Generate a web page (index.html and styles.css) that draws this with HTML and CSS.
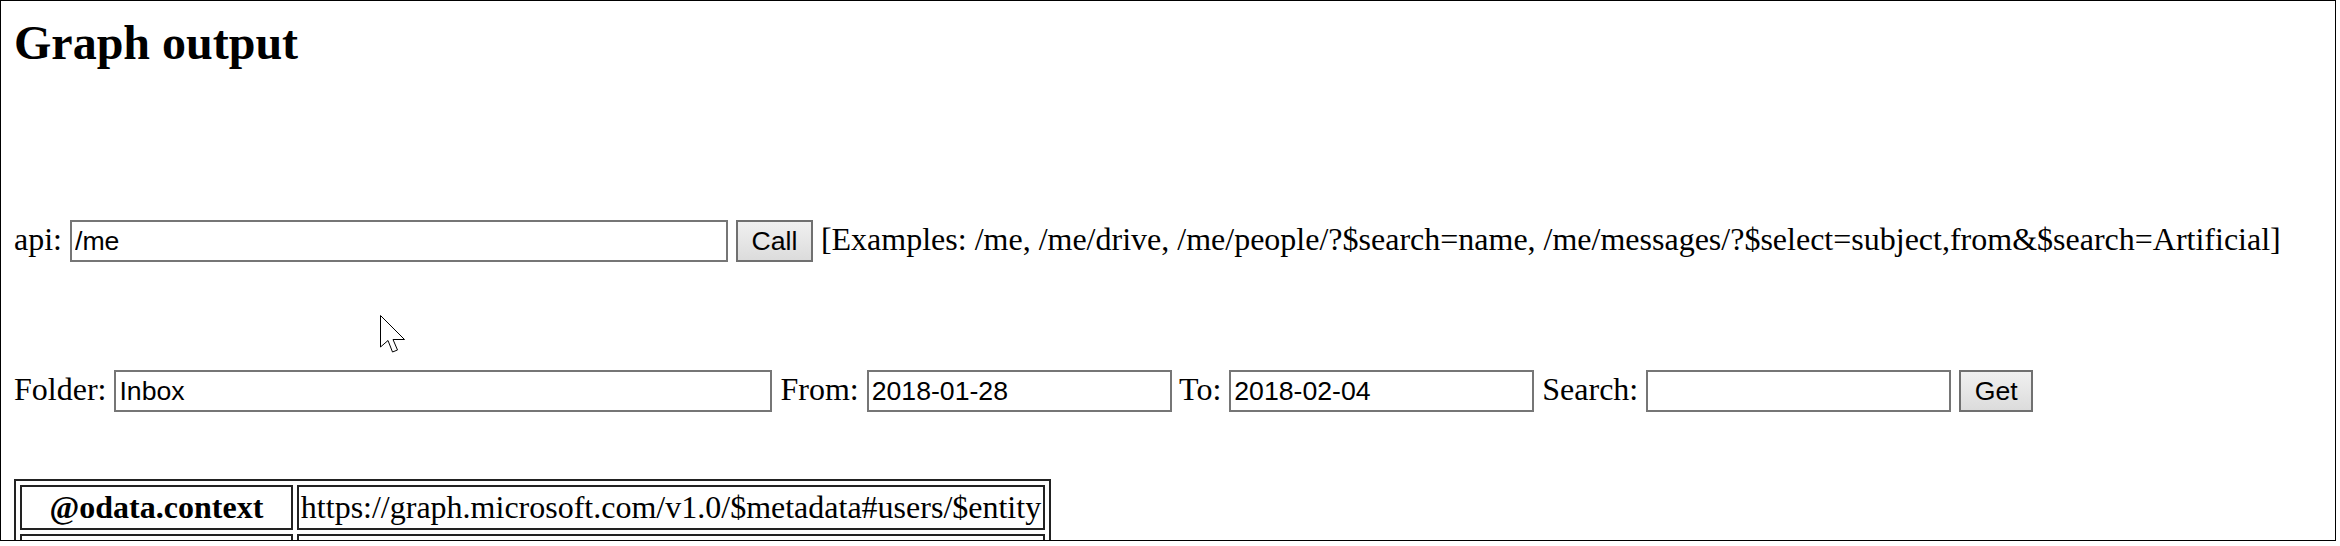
FILE: index.html
```html
<!DOCTYPE html>
<html>
<head>
<meta charset="utf-8">
<title>Graph output</title>
<link rel="stylesheet" href="styles.css">
</head>
<body>
<div class="frame">
  <h2 class="title">Graph output</h2>
  <div class="row api-row">api: <input class="field field-wide" type="text" value="/me"> <button class="btn">Call</button> [Examples: /me, /me/drive, /me/people/?$search=name, /me/messages/?$select=subject,from&amp;$search=Artificial]</div>
  <div class="row mail-row">Folder: <input class="field field-wide" type="text" value="Inbox"> From: <input class="field field-date" type="text" value="2018-01-28"> To: <input class="field field-date" type="text" value="2018-02-04"> Search: <input class="field field-date" type="text" value=""> <button class="btn">Get</button></div>
  <table class="result">
    <tr><th class="key">@odata.context</th><td class="val">https://graph.microsoft.com/v1.0/$metadata#users/$entity</td></tr>
    <tr><th class="key">userPrincipalName</th><td class="val">user@contoso.com</td></tr>
  </table>
  <svg class="cursor" width="28" height="40" viewBox="0 0 28 40">
    <polygon points="0.5,0.5 0.5,32 8,25.5 12.5,37 17.5,35 13,24.5 24.5,24.5" fill="#fff" stroke="#000" stroke-width="1"/>
  </svg>
</div>
</body>
</html>
```

FILE: styles.css
```css
body {
  margin: 0;
  background: #fff;
  color: #000;
  font-family: "Liberation Serif", "Times New Roman", serif;
  font-size: 32px;
}

.frame {
  position: relative;
  box-sizing: border-box;
  width: 2336px;
  height: 541px;
  border: 1px solid #000;
  padding: 0 13px;
  overflow: hidden;
}

.title {
  margin: 14px 0 0;
  font-size: 48px;
  font-weight: bold;
  line-height: normal;
}

.row {
  white-space: nowrap;
}

.api-row {
  margin-top: 150px;
}

.mail-row {
  margin-top: 108px;
}

.field {
  box-sizing: border-box;
  height: 42px;
  margin: 0;
  padding: 0 3px;
  border: 2px solid #767676;
  border-radius: 0;
  background: #fff;
  color: #000;
  font-family: "Liberation Sans", Arial, sans-serif;
  font-size: 26.67px;
  vertical-align: baseline;
}

.field-wide {
  width: 658px;
}

.field-date {
  width: 305px;
}

.btn {
  box-sizing: border-box;
  height: 42px;
  margin: 0;
  padding: 0 13.5px;
  border: 2px solid #707070;
  border-radius: 0;
  background: linear-gradient(#f0f0f0, #dcdcdc);
  color: #000;
  font-family: "Liberation Sans", Arial, sans-serif;
  font-size: 26.67px;
}

.result {
  margin-top: 67px;
  border: 2px solid #222;
  border-spacing: 4px;
}

.result th,
.result td {
  padding: 2px;
  border: 2px solid #222;
  white-space: nowrap;
}

.result .key {
  font-weight: bold;
  text-align: center;
}

.result .val {
  text-align: left;
}

.cursor {
  position: absolute;
  left: 379px;
  top: 314px;
}
```
